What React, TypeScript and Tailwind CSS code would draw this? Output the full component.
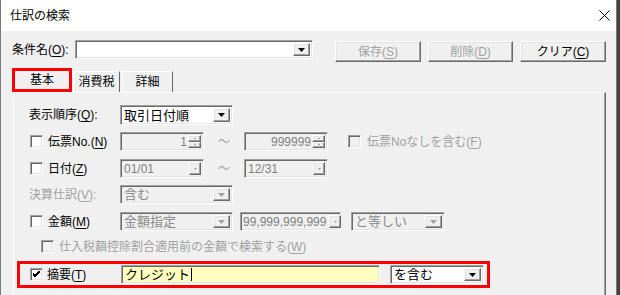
import React from 'react';

const sunken =
  'border border-t-[#a0a0a0] border-l-[#a0a0a0] border-r-white border-b-white shadow-[inset_1px_1px_0_#696969,inset_-1px_-1px_0_#e3e3e3]';
const raised =
  'border border-t-white border-l-white border-r-[#696969] border-b-[#696969] shadow-[inset_-1px_-1px_0_#a0a0a0,inset_1px_1px_0_#e3e3e3]';

const Key: React.FC<{ k: string }> = ({ k }) => <u className="underline underline-offset-[2px]">{k}</u>;

const Arrow: React.FC<{ disabled?: boolean; small?: boolean }> = ({ disabled, small }) => (
  <svg width={small ? 3 : 7} height={small ? 2 : 4} viewBox={small ? '0 0 3 2' : '0 0 7 4'}>
    <polygon points={small ? '0,0 3,0 1.5,2' : '0,0 7,0 3.5,4'} fill={disabled ? '#a0a0a0' : '#000'} />
  </svg>
);

const DropBtn: React.FC<{ disabled?: boolean; small?: boolean }> = ({ disabled, small }) => (
  <div className={`${raised} bg-[#f0f0f0] ${small ? 'w-[12px]' : 'w-[17px]'} h-full flex items-center justify-center shrink-0`}>
    <Arrow disabled={disabled} small={small} />
  </div>
);

const Combo: React.FC<{ w: string; text: string; disabled?: boolean; h?: string }> = ({ w, text, disabled, h }) => (
  <div
    className={`${sunken} ${w} ${h ?? 'h-[20px]'} flex items-stretch p-[2px] ${disabled ? 'bg-[#f0f0f0] text-[#8a8a8a]' : 'bg-white text-black'}`}
  >
    <div className="flex-1 flex items-center pl-[1px] text-[13px]">{text}</div>
    <DropBtn disabled={disabled} />
  </div>
);

const Spin: React.FC<{ text: string }> = ({ text }) => (
  <div className={`${sunken} w-[84px] h-[19px] bg-[#f0f0f0] flex items-stretch p-[2px] text-[#808080]`}>
    <div className="flex-1 flex items-center justify-end pr-[1px] text-[12px]">{text}</div>
    <div className="w-[13px] flex flex-col">
      <div className={`${raised} flex-1 flex items-center justify-center`}>
        <div className="w-[2px] h-[1px] bg-[#a0a0a0]" />
      </div>
      <div className={`${raised} flex-1 flex items-center justify-center`}>
        <div className="w-[2px] h-[1px] bg-[#a0a0a0]" />
      </div>
    </div>
  </div>
);

const DateBox: React.FC<{ text: string; w?: string; right?: boolean }> = ({ text, w, right }) => (
  <div className={`${sunken} ${w ?? 'w-[84px]'} h-[19px] bg-[#f0f0f0] flex items-stretch p-[2px] text-[#808080]`}>
    <div className={`flex-1 flex items-center text-[12px] ${right ? 'justify-end pr-[3px]' : 'pl-[1px]'}`}>{text}</div>
    <DropBtn disabled small />
  </div>
);

const Check: React.FC<{ checked?: boolean; disabled?: boolean }> = ({ checked, disabled }) => (
  <div className={`${sunken} w-[13px] h-[13px] shrink-0 flex items-center justify-center ${disabled ? 'bg-[#f0f0f0]' : 'bg-white'}`}>
    {checked && (
      <svg width="7" height="7" viewBox="0 0 7 7">
        <path d="M0 3 L2 5 L7 0 M0 4 L2 6 L7 1 M0 2 L2 4 L7 -1" stroke="#000" strokeWidth="1" fill="none" />
      </svg>
    )}
  </div>
);

const Tilde = () => <div className="w-[40px] text-center text-[#a0a0a0] text-[12px]">～</div>;

const TopButton: React.FC<{ label: string; k: string; disabled?: boolean; w: string }> = ({ label, k, disabled, w }) => (
  <div className={`${raised} ${w} h-[21px] flex items-center justify-center text-[12px] ${disabled ? 'text-[#a0a0a0]' : 'text-black'}`}>
    {label}(<Key k={k} />)
  </div>
);

export default function App() {
  return (
    <div className="w-[620px] h-[295px] overflow-hidden bg-[#4a403a] flex font-['Liberation_Sans','Noto_Sans_CJK_JP',sans-serif] text-[12px] leading-none text-black">
      <div className="w-[617px] h-full flex flex-col bg-[#f0f0f0] border-l border-r border-[#7a7a7a]">
        {/* title bar */}
        <div className="h-[31px] bg-white flex items-center justify-between pl-[9px] pr-[6px] shrink-0">
          <span className="text-[12px]">仕訳の検索</span>
          <svg width="11" height="11" viewBox="0 0 11 11">
            <path d="M0.5 0.5 L10.5 10.5 M10.5 0.5 L0.5 10.5" stroke="#000" strokeWidth="1" />
          </svg>
        </div>

        {/* condition name row */}
        <div className="mt-[9px] h-[22px] flex items-start pl-[11px]">
          <div className="w-[63px] h-[19px] flex items-center">
            条件名(<Key k="O" />):
          </div>
          <div className={`${sunken} w-[238px] h-[19px] bg-white flex items-stretch justify-end p-[2px]`}>
            <DropBtn />
          </div>
          <div className="ml-[22px] mt-[1px] flex gap-[7px]">
            <TopButton label="保存" k="S" disabled w="w-[86px]" />
            <TopButton label="削除" k="D" disabled w="w-[85px]" />
            <TopButton label="クリア" k="C" w="w-[86px]" />
          </div>
        </div>

        {/* tabs */}
        <div className="mt-[6px] h-[24px] flex items-end pl-[11px]">
          <div className="w-[60px] h-[24px] border-[3px] border-[#ff0000] bg-[#f0f0f0] flex items-center justify-center">
            基本
          </div>
          <div className="ml-[1px] w-[47px] h-[21px] border-t border-l border-white border-r border-r-[#696969] flex items-center justify-center">
            消費税
          </div>
          <div className="ml-[2px] w-[51px] h-[21px] border-t border-l border-white border-r border-r-[#696969] flex items-center justify-center">
            詳細
          </div>
        </div>

        {/* panel */}
        <div className="ml-[12px] w-[593px] flex-1 border-t border-l border-white border-r border-r-[#696969] shadow-[inset_-1px_0_0_#a0a0a0] pt-[12px] pl-[3px] flex flex-col">
          {/* 表示順序 */}
          <div className="h-[20px] flex items-center pl-[12px]">
            <div className="w-[91px]">
              表示順序(<Key k="Q" />):
            </div>
            <Combo w="w-[113px]" text="取引日付順" />
          </div>

          {/* 伝票No */}
          <div className="mt-[7px] h-[19px] flex items-center pl-[12px]">
            <div className="w-[91px] flex items-center">
              <div className="ml-[1px]">
                <Check />
              </div>
              <span className="ml-[5px]">
                伝票No.(<Key k="N" />)
              </span>
            </div>
            <Spin text="1" />
            <Tilde />
            <Spin text="999999" />
            <div className="ml-[20px] flex items-center text-[#a0a0a0]">
              <Check disabled />
              <span className="ml-[6px]">
                伝票Noなしを含む(<Key k="F" />)
              </span>
            </div>
          </div>

          {/* 日付 */}
          <div className="mt-[8px] h-[19px] flex items-center pl-[12px]">
            <div className="w-[91px] flex items-center">
              <div className="ml-[1px]">
                <Check />
              </div>
              <span className="ml-[5px]">
                日付(<Key k="Z" />)
              </span>
            </div>
            <DateBox text="01/01" />
            <Tilde />
            <DateBox text="12/31" />
          </div>

          {/* 決算仕訳 */}
          <div className="mt-[7px] h-[19px] flex items-center pl-[12px]">
            <div className="w-[91px] text-[#a0a0a0]">
              決算仕訳(<Key k="V" />):
            </div>
            <Combo w="w-[113px]" h="h-[19px]" text="含む" disabled />
          </div>

          {/* 金額 */}
          <div className="mt-[8px] h-[19px] flex items-center pl-[12px]">
            <div className="w-[91px] flex items-center">
              <div className="ml-[1px]">
                <Check />
              </div>
              <span className="ml-[5px]">
                金額(<Key k="M" />)
              </span>
            </div>
            <Combo w="w-[113px]" h="h-[19px]" text="金額指定" disabled />
            <div className="ml-[7px]">
              <DateBox text="99,999,999,999" w="w-[101px]" right />
            </div>
            <div className="ml-[10px]">
              <Combo w="w-[94px]" h="h-[19px]" text="と等しい" disabled />
            </div>
          </div>

          {/* 仕入税額 */}
          <div className="mt-[7px] h-[17px] flex items-center pl-[24px] text-[#a0a0a0]">
            <Check disabled />
            <span className="ml-[5px]">
              仕入税額控除割合適用前の金額で検索する(<Key k="W" />)
            </span>
          </div>

          {/* 摘要 */}
          <div className="mt-[6px] w-[473px] h-[27px] border-[3px] border-[#ff0000] flex items-center pl-[10px]">
            <div className="w-[91px] flex items-center">
              <Check checked />
              <span className="ml-[4px]">
                摘要(<Key k="T" />)
              </span>
            </div>
            <div className={`${sunken} w-[259px] h-[19px] bg-[#ffffc0] flex items-center pl-[3px] text-[13px]`}>
              クレジット
              <div className="w-[1px] h-[13px] bg-black ml-[1px]" />
            </div>
            <div className="ml-[10px]">
              <Combo w="w-[94px]" h="h-[19px]" text="を含む" />
            </div>
          </div>
        </div>
      </div>
    </div>
  );
}
